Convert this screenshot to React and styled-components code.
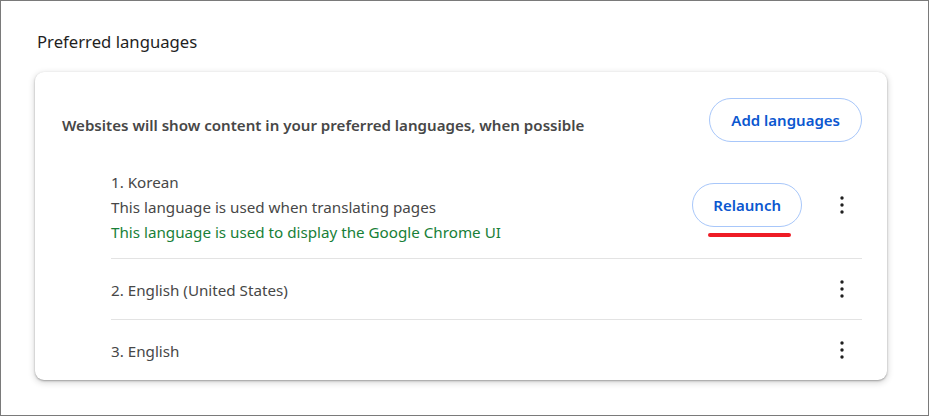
import React from 'react';
import styled, { createGlobalStyle } from 'styled-components';

const GlobalStyle = createGlobalStyle`
  html, body {
    margin: 0;
    padding: 0;
    background: #ffffff;
  }
  body {
    font-family: "Noto Sans", "Open Sans", Arial, sans-serif;
    color: #1f1f1f;
  }
`;

const Frame = styled.div`
  box-sizing: border-box;
  width: 929px;
  height: 416px;
  border: 1px solid #7a7a7a;
  padding: 28px 41px 0 34px;
  background: #ffffff;
`;

const Heading = styled.h2`
  margin: 0 0 0 2px;
  height: 43px;
  font-size: 16.7px;
  font-weight: 400;
  line-height: 26px;
  color: #1f1f1f;
`;

const Card = styled.section`
  border-radius: 9px;
  background: #ffffff;
  box-shadow: 0 1px 2px rgba(0, 0, 0, 0.3), 0 2px 6px 1px rgba(0, 0, 0, 0.15);
  padding: 26px 25px 0 27px;
`;

const CardHeader = styled.div`
  display: flex;
  align-items: flex-start;
  justify-content: space-between;
  margin-bottom: 14px;
`;

const Intro = styled.p`
  margin: 15px 0 0;
  font-size: 15.1px;
  font-weight: 600;
  line-height: 24px;
  color: #474747;
`;

const PillButton = styled.button`
  box-sizing: border-box;
  height: 44px;
  padding: 0 ${(p) => p.$pad}px;
  border: 1px solid #a8c7fa;
  border-radius: 22px;
  background: #ffffff;
  color: #0b57d0;
  font-family: inherit;
  font-size: 15px;
  font-weight: 600;
  cursor: pointer;
`;

const List = styled.ul`
  list-style: none;
  margin: 0 0 0 49px;
  padding: 0;
`;

const Row = styled.li`
  display: flex;
  align-items: center;
  min-height: 60px;
  padding: ${(p) => (p.$tall ? '14px 0 13px' : '3px 0 0')};
  box-sizing: border-box;
  & + & {
    min-height: 61px;
    border-top: 1px solid #e3e3e3;
  }
`;

const RowText = styled.div`
  flex: 1;
  font-size: 15.2px;
  line-height: 25px;
  color: #474747;
`;

const Line = styled.div`
  color: ${(p) => (p.$green ? '#188038' : '#474747')};
`;

const Actions = styled.div`
  display: flex;
  align-items: center;
  gap: 20px;
  margin-top: ${(p) => (p.$lift ? '-6px' : '-3px')};
`;

const RelaunchWrap = styled.div`
  position: relative;
`;

const Underline = styled.span`
  position: absolute;
  left: 16px;
  top: 50px;
  width: 83px;
  height: 4px;
  border-radius: 2px;
  background: #ee1c25;
`;

const MoreButton = styled.button`
  width: 40px;
  height: 40px;
  border: none;
  background: transparent;
  padding: 0;
  display: flex;
  align-items: center;
  justify-content: center;
  cursor: pointer;
`;

const Kebab = () => (
  <svg width="4" height="18" viewBox="0 0 4 18" aria-hidden="true">
    <circle cx="2" cy="2" r="1.7" fill="#1f1f1f" />
    <circle cx="2" cy="9" r="1.7" fill="#1f1f1f" />
    <circle cx="2" cy="16" r="1.7" fill="#1f1f1f" />
  </svg>
);

const languages = [
  { name: '1. Korean', current: true },
  { name: '2. English (United States)' },
  { name: '3. English' },
];

export default function App() {
  return (
    <>
      <GlobalStyle />
      <Frame>
        <Heading>Preferred languages</Heading>
        <Card>
          <CardHeader>
            <Intro>Websites will show content in your preferred languages, when possible</Intro>
            <PillButton $pad={21}>Add languages</PillButton>
          </CardHeader>
          <List>
            {languages.map((lang) => (
              <Row key={lang.name} $tall={lang.current}>
                <RowText>
                  <Line>{lang.name}</Line>
                  {lang.current && (
                    <>
                      <Line>This language is used when translating pages</Line>
                      <Line $green>This language is used to display the Google Chrome UI</Line>
                    </>
                  )}
                </RowText>
                <Actions $lift={lang.current}>
                  {lang.current && (
                    <RelaunchWrap>
                      <PillButton $pad={20}>Relaunch</PillButton>
                      <Underline />
                    </RelaunchWrap>
                  )}
                  <MoreButton aria-label="More actions">
                    <Kebab />
                  </MoreButton>
                </Actions>
              </Row>
            ))}
          </List>
        </Card>
      </Frame>
    </>
  );
}
